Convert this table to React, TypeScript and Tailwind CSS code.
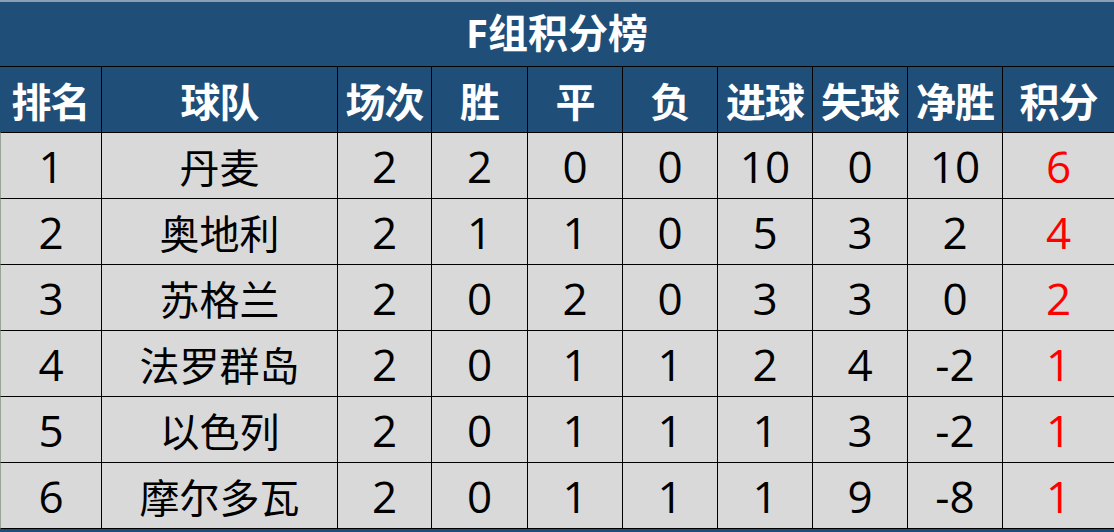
const columns = ["排名", "球队", "场次", "胜", "平", "负", "进球", "失球", "净胜", "积分"];

const rows: (string | number)[][] = [
  [1, "丹麦", 2, 2, 0, 0, 10, 0, 10, 6],
  [2, "奥地利", 2, 1, 1, 0, 5, 3, 2, 4],
  [3, "苏格兰", 2, 0, 2, 0, 3, 3, 0, 2],
  [4, "法罗群岛", 2, 0, 1, 1, 2, 4, -2, 1],
  [5, "以色列", 2, 0, 1, 1, 1, 3, -2, 1],
  [6, "摩尔多瓦", 2, 0, 1, 1, 1, 9, -8, 1],
];

const grid = "grid grid-cols-[101px_236px_94px_96px_95px_95px_95px_95px_95px_112px]";

export default function App() {
  return (
    <div className="w-[1114px] h-[532px] overflow-hidden bg-[#1f4e78] font-['Open_Sans','Noto_Sans_CJK_SC',sans-serif]">
      {/* title */}
      <div className="h-[66px] border-t-2 border-[#8d9fb3] flex items-center justify-center text-white text-[40px] font-bold leading-none pb-[2px]">
        F组积分榜
      </div>

      {/* header */}
      <div className={grid}>
        {columns.map((c, i) => (
          <div
            key={c}
            className={`h-[66px] border-t border-black flex items-center justify-center text-white text-[40px] font-bold leading-none font-['Noto_Sans_CJK_SC',sans-serif] tracking-[-1px] ${i > 0 ? "border-l" : ""}`}
          >
            {c}
          </div>
        ))}
      </div>

      {/* body */}
      {rows.map((r, ri) => (
        <div key={ri} className={grid}>
          {r.map((v, i) => (
            <div
              key={i}
              className={`h-[66px] bg-[#d9d9d9] border-t border-black flex items-center justify-center leading-none ${
                i > 0 ? "border-l" : "border-l border-l-[#9aa39a]"
              } ${ri === rows.length - 1 ? "h-[67px] border-b" : ""} ${
                i === 1 ? "text-[40px] font-['Noto_Sans_CJK_SC',sans-serif]" : "text-[44px]"
              } ${i === 9 ? "text-[#ff0000]" : "text-black"}`}
            >
              {v}
            </div>
          ))}
        </div>
      ))}
    </div>
  );
}
